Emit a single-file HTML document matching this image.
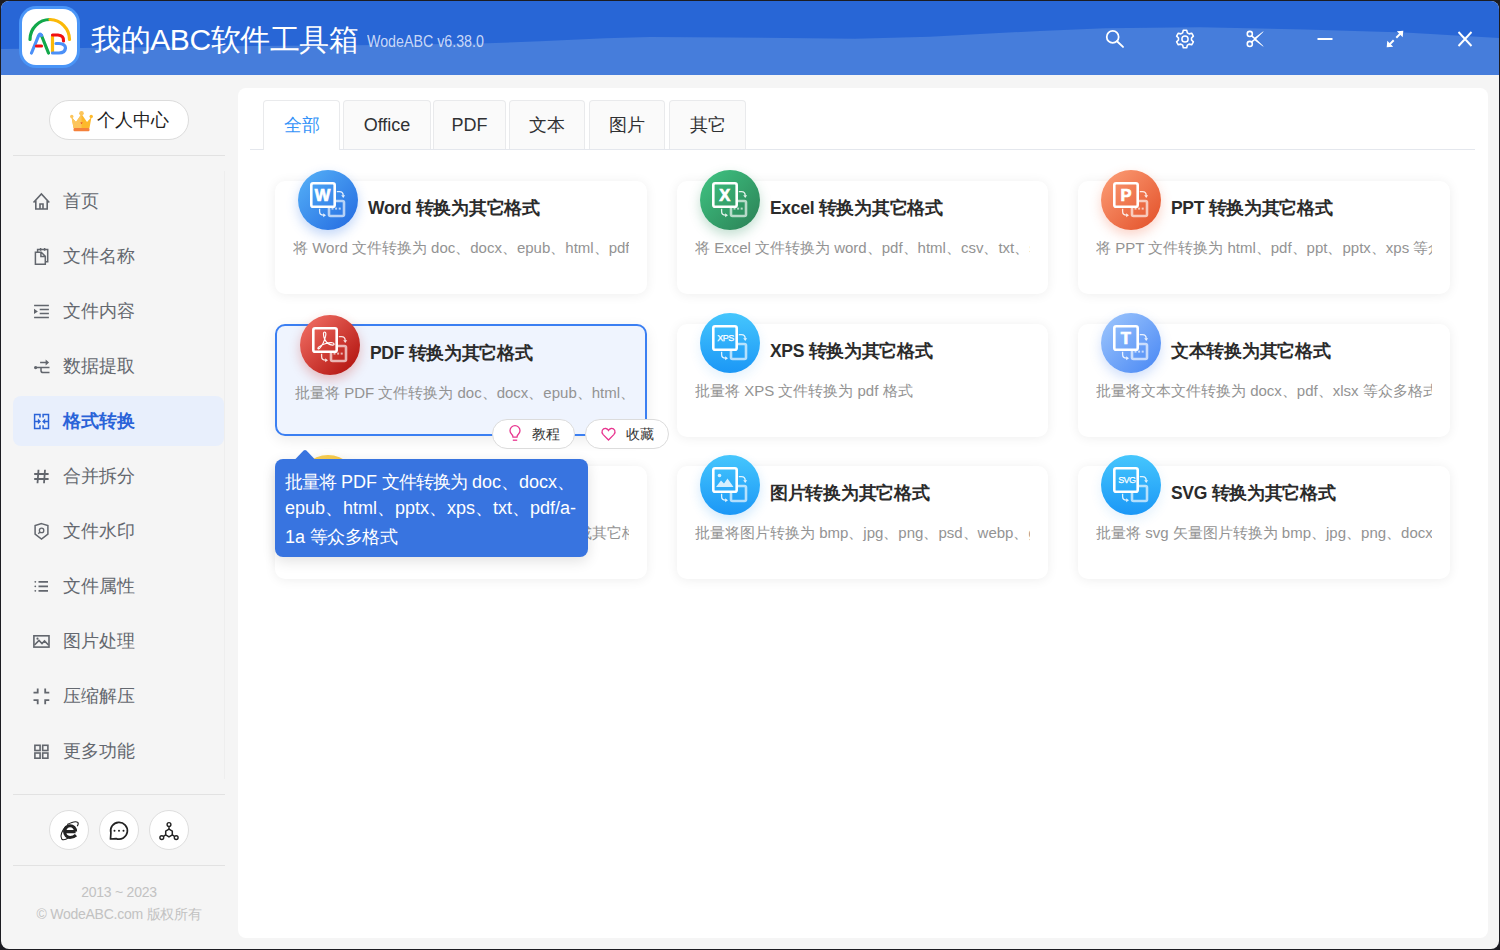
<!DOCTYPE html>
<html><head><meta charset="utf-8"><style>
*{margin:0;padding:0;box-sizing:border-box}
html,body{width:1500px;height:950px;overflow:hidden;background:#1c1c22;font-family:"Liberation Sans",sans-serif}
.a{position:absolute}
#frame{left:0;top:0;width:1500px;height:950px;background:#f5f5f5;clip-path:inset(1px 1px 1px 1px round 8px)}
.t{position:absolute;white-space:nowrap;line-height:1}
svg{position:absolute;overflow:visible}

.card{position:absolute;height:113px;border-radius:10px;background:#fff;box-shadow:0 1px 12px rgba(0,0,0,.07)}
.ctitle{position:absolute;white-space:nowrap;line-height:1;font-size:17.5px;font-weight:bold;color:#2b2b2b;letter-spacing:-.3px}
.cdesc{position:absolute;white-space:nowrap;line-height:1.2;font-size:15px;color:#939393;overflow:hidden}
.circ{position:absolute;width:60px;height:60px;border-radius:30px}
</style></head><body><div id="frame" class="a">
<div class="a" style="left:0;top:0;width:1500px;height:75px;background:#2866d6"></div>
<svg style="left:0;top:0" width="1500" height="75" viewBox="0 0 1500 75"><path fill="#467ddb" d="M0,49 L180,46.7 L380,45 L480,43.5 L540,41.3 L605,38.3 L650,37 L730,37.5 L855,38.7 L930,36.7 L980,34 L1040,31 L1105,28.3 L1200,27.3 L1305,29.4 L1405,32.6 L1500,38 L1500,75 L0,75Z"/></svg>
<div class="a" style="left:19px;top:6px;width:61px;height:62px;border-radius:17px;background:#4a95f7"></div>
<div class="a" style="left:22px;top:9px;width:55px;height:56px;border-radius:14px;background:#fff"></div>
<svg style="left:19px;top:6px" width="61" height="62" viewBox="0 0 61 62" fill="none" stroke-linecap="round" stroke-width="3.2">
<path d="M11,33.5 A20,20 0 0 1 31,13.5" stroke="#12a84a"/>
<path d="M31,13.5 A20,20 0 0 1 50.5,33.5" stroke="#fbb908"/>
<path d="M22.5,29.5 L29.5,47" stroke="#12a84a"/>
<path d="M12.5,47 L19.6,29.6 Q21,26.8 22.6,29.3" stroke="#4b90f8"/>
<path d="M17.5,40 L22.5,40" stroke="#f20f0f"/>
<path d="M33.5,30 L33.5,46" stroke="#fbb908"/>
<path d="M33.5,29 L39,29 Q45,29.5 44.5,35" stroke="#f20f0f"/>
<path d="M37,37.5 L40,37.5 Q46.5,38 46.5,42 Q46,47 40,47 L33.5,47" stroke="#4b90f8"/>
</svg>
<div class="t" style="left:91px;top:25px;font-size:30px;letter-spacing:-0.4px;color:#fff" id="title">我的ABC软件工具箱</div>
<div class="t" style="left:367px;top:34px;font-size:16px;color:#c9d8f6;transform:scaleX(.89);transform-origin:0 0" id="ver">WodeABC v6.38.0</div>
<svg style="left:0;top:0" width="1500" height="75" fill="none" stroke="#fff" stroke-width="1.9" stroke-linecap="round">
<circle cx="1112.7" cy="36.9" r="5.95" stroke-width="1.75"/><path d="M1117,41.2 L1123,46.9" stroke-width="1.9"/>
<path d="M1182.63,32.84 L1183.31,30.31 L1186.69,30.31 L1187.37,32.84 L1189.15,33.87 L1191.68,33.19 L1193.37,36.12 L1191.52,37.97 L1191.52,40.03 L1193.37,41.88 L1191.68,44.81 L1189.15,44.13 L1187.37,45.16 L1186.69,47.69 L1183.31,47.69 L1182.63,45.16 L1180.85,44.13 L1178.32,44.81 L1176.63,41.88 L1178.48,40.03 L1178.48,37.97 L1176.63,36.12 L1178.32,33.19 L1180.85,33.87Z" stroke-width="1.6" stroke-linejoin="round"/>
<circle cx="1185" cy="39" r="3.1" stroke-width="1.5"/>
<circle cx="1249.8" cy="33.9" r="2.55" stroke-width="1.55"/><circle cx="1249.8" cy="43.9" r="2.55" stroke-width="1.55"/>
<path d="M1251.7,35.9 L1255.2,39 M1251.7,41.9 L1255.2,39" stroke-width="1.5"/>
<path d="M1254.2,39.9 L1263.7,47 L1262.8,45.6 L1256.2,39 L1262.8,32.4 L1263.7,31 L1254.2,38.1Z" fill="#fff" stroke="none"/>
<path d="M1317.5,39 L1332.5,39" stroke-width="2.1" stroke-linecap="butt"/>
<path d="M1396.3,37.7 L1400.6,33.4 M1393.7,40.3 L1389.4,44.6" stroke-width="2" stroke-linecap="butt"/>
<path d="M1403.3,30.7 L1402.7,37.2 L1396.8,31.3Z M1386.7,47.3 L1387.3,40.8 L1393.2,46.7Z" fill="#fff" stroke="none"/>
<path d="M1458.5,32 L1471.5,46 M1471.5,32 L1458.5,46" stroke-width="1.9" stroke-linecap="butt"/>
</svg>
<div class="a" style="left:49px;top:100px;width:140px;height:40px;border-radius:20px;background:#fff;border:1px solid #dcdcdc"></div>
<svg style="left:70px;top:110px" width="23" height="22" viewBox="0 0 23 22">
<path d="M1.5,7 L6,12 L11.5,4 L17,12 L21.5,7 L19.5,18 L3.5,18Z" fill="#fdb92c"/>
<path d="M1.5,7 L6,12 L11.5,4 L11.5,18 L3.5,18Z" fill="#fcc55c"/>
<circle cx="11.5" cy="3.2" r="2.3" fill="#fcc55c"/><circle cx="1.8" cy="6.5" r="1.7" fill="#fcc55c"/><circle cx="21.2" cy="6.5" r="1.7" fill="#fdb92c"/>
<rect x="3.5" y="18" width="16" height="3.2" rx="1" fill="#f5813a"/>
<path d="M10.3,12.5 l1.2,1.6 l1.2,-1.6z" fill="#e2352a"/>
</svg>
<div class="t" style="left:97px;top:111px;font-size:18px;color:#222">个人中心</div>
<div class="a" style="left:13px;top:155px;width:212px;height:1px;background:#e2e2e2"></div>
<div class="a" style="left:224px;top:171px;width:1px;height:608px;background:#eeeeee"></div>
<div class="a" style="left:13px;top:396px;width:211px;height:50px;border-radius:8px;background:#e8effc"></div>
<div class="t" style="left:63px;top:192px;font-size:18px;color:#64686f">首页</div>
<div class="t" style="left:63px;top:247px;font-size:18px;color:#64686f">文件名称</div>
<div class="t" style="left:63px;top:302px;font-size:18px;color:#64686f">文件内容</div>
<div class="t" style="left:63px;top:357px;font-size:18px;color:#64686f">数据提取</div>
<div class="t" style="left:63px;top:412px;font-size:18px;font-weight:bold;color:#2a63d8">格式转换</div>
<div class="t" style="left:63px;top:467px;font-size:18px;color:#64686f">合并拆分</div>
<div class="t" style="left:63px;top:522px;font-size:18px;color:#64686f">文件水印</div>
<div class="t" style="left:63px;top:577px;font-size:18px;color:#64686f">文件属性</div>
<div class="t" style="left:63px;top:632px;font-size:18px;color:#64686f">图片处理</div>
<div class="t" style="left:63px;top:687px;font-size:18px;color:#64686f">压缩解压</div>
<div class="t" style="left:63px;top:742px;font-size:18px;color:#64686f">更多功能</div>
<svg style="left:0;top:0" width="230" height="780" fill="none" stroke="#62666d" stroke-width="1.6">
<path d="M33.5,202.5 L41.4,194 L49.3,202.5 M35.8,200.5 V209 H47.2 V200.5 M40,209 V204 H43 V209"/>
<path d="M35.4,252.3 H41.2 L45.3,256.2 V264.3 H35.4Z M40.9,252.3 V256.6 H45.3" stroke-width="1.5"/>
<path d="M37.6,252 V249.4 H47.7 V261.7 H45.5" stroke-width="1.5"/>
<path d="M40.6,248 V250.8 M44.6,248 V250.8" stroke-width="1.5"/>
<path d="M34.1,305.4 H48.9 M39.7,309.4 H48.9 M39.7,313.45 H48.9 M34.1,317.4 H48.9" stroke-width="1.5"/>
<path d="M34,308.7 L37.9,311.4 L34,314.1Z" fill="#62666d" stroke="none"/>
<path d="M35.6,367.6 H49.5 M41,367.6 V370.5 Q41,372.6 43.2,372.6 H49.5" stroke-width="1.5"/>
<path d="M40.1,362.5 H46.5" stroke-width="1.5"/>
<path d="M45.6,359.6 L49.1,362.5 L45.6,365.4Z" fill="#62666d" stroke="none"/>
<circle cx="35.6" cy="367.6" r="1.6" fill="#62666d" stroke="none"/>
<path d="M38.5,469.8 L37.5,483.2 M45,469.8 L44,483.2 M34.2,474 H48.6 M34.2,479 H48.6" stroke-width="1.8"/>
<path d="M41.5,523.6 L47.9,525.5 V534.2 L41.5,539.1 L35.1,534.2 V525.5Z" stroke-width="1.5"/>
<circle cx="41.6" cy="530.4" r="2.2" stroke-width="1.3"/><path d="M40,532 L38.3,533.8" stroke-width="1.3"/>
<path d="M38.5,581.8 H48 M38.5,586.3 H48 M38.5,590.8 H48" stroke-width="1.7"/>
<circle cx="35.3" cy="581.8" r=".9" fill="#62666d" stroke="none"/><circle cx="35.3" cy="586.3" r=".9" fill="#62666d" stroke="none"/><circle cx="35.3" cy="590.8" r=".9" fill="#62666d" stroke="none"/>
<rect x="33.9" y="635.8" width="15.1" height="11.3"/>
<path d="M34.5,645 L39,640.5 L42,643.5 L44.5,641 L48.5,645"/>
<circle cx="37.5" cy="638.7" r="1.1" fill="#62666d" stroke="none"/>
<path d="M33.5,692.7 H37.7 V688.5 M45.2,688.5 V692.7 H49.3 M33.5,700.2 H37.7 V704.3 M45.2,704.3 V700.2 H49.3" stroke-width="1.8"/>
<rect x="34.9" y="745.3" width="5.2" height="5.2"/><rect x="42.7" y="745.3" width="5.2" height="5.2"/><rect x="34.9" y="753" width="5.2" height="5.2"/><rect x="42.7" y="753" width="5.2" height="5.2"/>
</svg>
<svg style="left:0;top:0" width="230" height="780" fill="none" stroke="#2a63d8" stroke-width="1.6">
<path d="M40,417.6 V414.5 H34.6 V428.4 H40 V425.3 M43.1,417.6 V414.5 H48.5 V428.4 H43.1 V425.3 M34.6,421.4 H38.5 M44.6,421.4 H48.5" stroke-width="1.5"/>
<path d="M37.9,418.6 L41,421.4 L37.9,424.2Z M45.2,418.6 L42.1,421.4 L45.2,424.2Z" fill="#2a63d8" stroke="none"/>
</svg>
<div class="a" style="left:13px;top:794px;width:212px;height:1px;background:#e2e2e2"></div>
<div class="a" style="left:13px;top:865px;width:212px;height:1px;background:#e2e2e2"></div>
<div class="a" style="left:49px;top:810px;width:40px;height:40px;border-radius:20px;background:#fff;border:1px solid #dedede"></div>
<div class="a" style="left:99px;top:810px;width:40px;height:40px;border-radius:20px;background:#fff;border:1px solid #dedede"></div>
<div class="a" style="left:149px;top:810px;width:40px;height:40px;border-radius:20px;background:#fff;border:1px solid #dedede"></div>
<svg style="left:0;top:0" width="230" height="950" fill="none" stroke="#222" stroke-width="1.8">
<path d="M65,831.6 H75.6 M75.6,831.6 A5.5,5.9 0 0 0 64.6,831.6 A5.5,5.9 0 0 0 70,837.5 Q73.6,837.5 76,835.2" stroke-width="3.1"/>
<path d="M66,826.2 Q59,834.5 61.6,838.8 Q63.6,841.2 68.5,837.8" stroke-width="1.1"/>
<path d="M67.2,824.6 Q75,820.3 77.8,822.4 Q78.9,823.8 77.2,826.3" stroke-width="1.1"/>
<path d="M110.9,832.9 L110.5,839 L116.1,838.6 A8.4,8.4 0 1 0 110.9,832.9Z" stroke-width="1.7" stroke-linejoin="round"/>
<circle cx="114.5" cy="830.8" r="1" fill="#222" stroke="none"/><circle cx="119" cy="830.8" r="1" fill="#222" stroke="none"/><circle cx="123.5" cy="830.8" r="1" fill="#222" stroke="none"/>
<path d="M169,829.2 L172.3,831.1 L172.3,834.9 L169,836.8 L165.7,834.9 L165.7,831.1Z" stroke-width="1.5"/>
<circle cx="169" cy="824.5" r="1.9" stroke-width="1.4"/><circle cx="161.8" cy="837.6" r="1.9" stroke-width="1.4"/><circle cx="176.2" cy="837.6" r="1.9" stroke-width="1.4"/>
<path d="M169,826.4 V829.2 M165.7,834.9 L163.5,836.4 M172.3,834.9 L174.5,836.4" stroke-width="1.4"/>
</svg>
<div class="t" style="left:0;width:238px;text-align:center;top:885px;font-size:14px;letter-spacing:-.25px;color:#c2c2c2">2013 ~ 2023</div>
<div class="t" style="left:0;width:238px;text-align:center;top:907px;font-size:14px;letter-spacing:-.25px;color:#c2c2c2">© WodeABC.com 版权所有</div>
<div class="a" style="left:238px;top:88px;width:1250px;height:850px;border-radius:8px;background:#fff"></div>
<div class="a" style="left:250px;top:149px;width:1225px;height:1px;background:#e4e7ed"></div>
<div class="a" style="left:263px;top:100px;width:77px;height:50px;border:1px solid #e9eaec;border-bottom:none;border-radius:4px 4px 0 0;background:#fff"></div>
<div class="t" style="left:263px;width:77px;text-align:center;top:116px;font-size:18px;color:#3593f8">全部</div>
<div class="a" style="left:343px;top:100px;width:88px;height:49px;border:1px solid #e9eaec;border-bottom:none;border-radius:4px 4px 0 0;background:#fafafa"></div>
<div class="t" style="left:343px;width:88px;text-align:center;top:116px;font-size:18px;color:#303133">Office</div>
<div class="a" style="left:433px;top:100px;width:73px;height:49px;border:1px solid #e9eaec;border-bottom:none;border-radius:4px 4px 0 0;background:#fafafa"></div>
<div class="t" style="left:433px;width:73px;text-align:center;top:116px;font-size:18px;color:#303133">PDF</div>
<div class="a" style="left:509px;top:100px;width:76px;height:49px;border:1px solid #e9eaec;border-bottom:none;border-radius:4px 4px 0 0;background:#fafafa"></div>
<div class="t" style="left:509px;width:76px;text-align:center;top:116px;font-size:18px;color:#303133">文本</div>
<div class="a" style="left:589px;top:100px;width:76px;height:49px;border:1px solid #e9eaec;border-bottom:none;border-radius:4px 4px 0 0;background:#fafafa"></div>
<div class="t" style="left:589px;width:76px;text-align:center;top:116px;font-size:18px;color:#303133">图片</div>
<div class="a" style="left:669px;top:100px;width:77px;height:49px;border:1px solid #e9eaec;border-bottom:none;border-radius:4px 4px 0 0;background:#fafafa"></div>
<div class="t" style="left:669px;width:77px;text-align:center;top:116px;font-size:18px;color:#303133">其它</div>
<div class="card" style="left:275px;top:181px;width:372px"></div>
<div class="circ" style="left:298px;top:170px;background:linear-gradient(135deg,#56b2f8,#2369e0);box-shadow:0 5px 12px rgba(40,110,230,.28)"><svg width="60" height="60" viewBox="0 0 60 60" style="left:0;top:0"><path d="M37.5,31 H44.5 Q46,31 46,32.5 V44.5 Q46,46 44.5,46 H32.5 Q31,46 31,44.5 V37.5" fill="none" stroke="rgba(255,255,255,.65)" stroke-width="2.6"/><g fill="rgba(255,255,255,.65)"><rect x="33.5" y="37.6" width="2" height="2"/><rect x="37.1" y="37.6" width="2" height="2"/><rect x="40.7" y="37.6" width="2" height="2"/></g><rect x="13.3" y="13.3" width="23.4" height="23.4" rx="1.8" fill="none" stroke="#fff" stroke-width="2.6"/><path d="M38.8,21.6 H41.5 Q45.2,21.6 45.2,25.6" stroke="rgba(255,255,255,0.85)" stroke-width="1.3" fill="none"/><path d="M43.2,25.2 L47.2,25.2 L45.2,28Z" fill="rgba(255,255,255,0.85)"/><path d="M21.6,38.8 V41.5 Q21.6,45.2 25.6,45.2" stroke="rgba(255,255,255,0.85)" stroke-width="1.3" fill="none"/><path d="M25.2,43.2 L25.2,47.2 L28,45.2Z" fill="rgba(255,255,255,0.85)"/><text x="24.6" y="31" text-anchor="middle" font-family="Liberation Sans" font-weight="bold" font-size="16.5" fill="#fff" stroke="#fff" stroke-width=".7">W</text></svg></div>
<div class="ctitle" style="left:368px;top:200px">Word 转换为其它格式</div>
<div class="cdesc" style="left:293px;top:239px;width:336px">将 Word 文件转换为 doc、docx、epub、html、pdf、txt 等众多格式</div>
<div class="card" style="left:677px;top:181px;width:371px"></div>
<div class="circ" style="left:700px;top:170px;background:linear-gradient(135deg,#3fc583,#2b8055);box-shadow:0 5px 12px rgba(40,140,90,.28)"><svg width="60" height="60" viewBox="0 0 60 60" style="left:0;top:0"><path d="M37.5,31 H44.5 Q46,31 46,32.5 V44.5 Q46,46 44.5,46 H32.5 Q31,46 31,44.5 V37.5" fill="none" stroke="rgba(255,255,255,.65)" stroke-width="2.6"/><g fill="rgba(255,255,255,.65)"><rect x="33.5" y="37.6" width="2" height="2"/><rect x="37.1" y="37.6" width="2" height="2"/><rect x="40.7" y="37.6" width="2" height="2"/></g><rect x="13.3" y="13.3" width="23.4" height="23.4" rx="1.8" fill="none" stroke="#fff" stroke-width="2.6"/><path d="M38.8,21.6 H41.5 Q45.2,21.6 45.2,25.6" stroke="rgba(255,255,255,0.85)" stroke-width="1.3" fill="none"/><path d="M43.2,25.2 L47.2,25.2 L45.2,28Z" fill="rgba(255,255,255,0.85)"/><path d="M21.6,38.8 V41.5 Q21.6,45.2 25.6,45.2" stroke="rgba(255,255,255,0.85)" stroke-width="1.3" fill="none"/><path d="M25.2,43.2 L25.2,47.2 L28,45.2Z" fill="rgba(255,255,255,0.85)"/><text x="24.8" y="31" text-anchor="middle" font-family="Liberation Sans" font-weight="bold" font-size="16.5" fill="#fff" stroke="#fff" stroke-width=".7">X</text></svg></div>
<div class="ctitle" style="left:770px;top:200px">Excel 转换为其它格式</div>
<div class="cdesc" style="left:695px;top:239px;width:335px">将 Excel 文件转换为 word、pdf、html、csv、txt、svg 等众多格式</div>
<div class="card" style="left:1078px;top:181px;width:372px"></div>
<div class="circ" style="left:1101px;top:170px;background:linear-gradient(135deg,#fda078,#e24e27);box-shadow:0 5px 12px rgba(240,100,60,.28)"><svg width="60" height="60" viewBox="0 0 60 60" style="left:0;top:0"><path d="M37.5,31 H44.5 Q46,31 46,32.5 V44.5 Q46,46 44.5,46 H32.5 Q31,46 31,44.5 V37.5" fill="none" stroke="rgba(255,255,255,.65)" stroke-width="2.6"/><g fill="rgba(255,255,255,.65)"><rect x="33.5" y="37.6" width="2" height="2"/><rect x="37.1" y="37.6" width="2" height="2"/><rect x="40.7" y="37.6" width="2" height="2"/></g><rect x="13.3" y="13.3" width="23.4" height="23.4" rx="1.8" fill="none" stroke="#fff" stroke-width="2.6"/><path d="M38.8,21.6 H41.5 Q45.2,21.6 45.2,25.6" stroke="rgba(255,255,255,0.85)" stroke-width="1.3" fill="none"/><path d="M43.2,25.2 L47.2,25.2 L45.2,28Z" fill="rgba(255,255,255,0.85)"/><path d="M21.6,38.8 V41.5 Q21.6,45.2 25.6,45.2" stroke="rgba(255,255,255,0.85)" stroke-width="1.3" fill="none"/><path d="M25.2,43.2 L25.2,47.2 L28,45.2Z" fill="rgba(255,255,255,0.85)"/><text x="25" y="31" text-anchor="middle" font-family="Liberation Sans" font-weight="bold" font-size="16.5" fill="#fff" stroke="#fff" stroke-width=".7">P</text></svg></div>
<div class="ctitle" style="left:1171px;top:200px">PPT 转换为其它格式</div>
<div class="cdesc" style="left:1096px;top:239px;width:336px">将 PPT 文件转换为 html、pdf、ppt、pptx、xps 等众多格式</div>
<div class="card" style="left:275px;top:324px;width:372px;height:112px;background:#eff4fe;border:2px solid #3b7ff2;box-shadow:0 4px 14px rgba(0,0,0,.08)"></div>
<div class="circ" style="left:300px;top:315px;background:linear-gradient(135deg,#f57469,#ad0c08);box-shadow:0 5px 12px rgba(200,40,30,.28)"><svg width="60" height="60" viewBox="0 0 60 60" style="left:0;top:0"><path d="M37.5,31 H44.5 Q46,31 46,32.5 V44.5 Q46,46 44.5,46 H32.5 Q31,46 31,44.5 V37.5" fill="none" stroke="rgba(255,255,255,.65)" stroke-width="2.6"/><g fill="rgba(255,255,255,.65)"><rect x="33.5" y="37.6" width="2" height="2"/><rect x="37.1" y="37.6" width="2" height="2"/><rect x="40.7" y="37.6" width="2" height="2"/></g><rect x="13.3" y="13.3" width="23.4" height="23.4" rx="1.8" fill="none" stroke="#fff" stroke-width="2.6"/><path d="M38.8,21.6 H41.5 Q45.2,21.6 45.2,25.6" stroke="rgba(255,255,255,0.85)" stroke-width="1.3" fill="none"/><path d="M43.2,25.2 L47.2,25.2 L45.2,28Z" fill="rgba(255,255,255,0.85)"/><path d="M21.6,38.8 V41.5 Q21.6,45.2 25.6,45.2" stroke="rgba(255,255,255,0.85)" stroke-width="1.3" fill="none"/><path d="M25.2,43.2 L25.2,47.2 L28,45.2Z" fill="rgba(255,255,255,0.85)"/><path d="M24.7,17 C23,17 23.2,20.5 24.6,24 C26.3,28 29.5,29.9 32.6,30.1 C34.7,30.1 34.6,27.9 32.1,27.7 C28,27.4 22,29.5 18.9,31.9 C16.9,33.5 18.2,34.8 19.8,33.2 C22.2,30.7 24.6,25.2 25.6,21.2 C26.1,18.7 25.9,17 24.7,17Z" fill="none" stroke="#fff" stroke-width="1.15"/></svg></div>
<div class="ctitle" style="left:370px;top:345px">PDF 转换为其它格式</div>
<div class="cdesc" style="left:295px;top:384px;width:336px">批量将 PDF 文件转换为 doc、docx、epub、html、pptx、xps 等众多格式</div>
<div class="card" style="left:677px;top:324px;width:371px"></div>
<div class="circ" style="left:700px;top:313px;background:linear-gradient(180deg,#45c6fd,#1b97f6);box-shadow:0 5px 12px rgba(30,150,240,.12)"><svg width="60" height="60" viewBox="0 0 60 60" style="left:0;top:0"><path d="M37.5,31 H44.5 Q46,31 46,32.5 V44.5 Q46,46 44.5,46 H32.5 Q31,46 31,44.5 V37.5" fill="none" stroke="rgba(255,255,255,.65)" stroke-width="2.6"/><rect x="13.3" y="13.3" width="23.4" height="23.4" rx="1.8" fill="none" stroke="#fff" stroke-width="2.6"/><path d="M38.8,21.6 H41.5 Q45.2,21.6 45.2,25.6" stroke="rgba(255,255,255,0.85)" stroke-width="1.3" fill="none"/><path d="M43.2,25.2 L47.2,25.2 L45.2,28Z" fill="rgba(255,255,255,0.85)"/><path d="M21.6,38.8 V41.5 Q21.6,45.2 25.6,45.2" stroke="rgba(255,255,255,0.85)" stroke-width="1.3" fill="none"/><path d="M25.2,43.2 L25.2,47.2 L28,45.2Z" fill="rgba(255,255,255,0.85)"/><text x="25.5" y="27.9" text-anchor="middle" font-family="Liberation Sans" font-size="9" letter-spacing="-.5" fill="#fff" stroke="#fff" stroke-width=".25">XPS</text></svg></div>
<div class="ctitle" style="left:770px;top:343px">XPS 转换为其它格式</div>
<div class="cdesc" style="left:695px;top:382px;width:335px">批量将 XPS 文件转换为 pdf 格式</div>
<div class="card" style="left:1078px;top:324px;width:372px"></div>
<div class="circ" style="left:1101px;top:313px;background:linear-gradient(135deg,#a0c8fd,#4786f4);box-shadow:0 5px 12px rgba(70,130,240,.25)"><svg width="60" height="60" viewBox="0 0 60 60" style="left:0;top:0"><path d="M37.5,31 H44.5 Q46,31 46,32.5 V44.5 Q46,46 44.5,46 H32.5 Q31,46 31,44.5 V37.5" fill="none" stroke="rgba(255,255,255,.65)" stroke-width="2.6"/><g fill="rgba(255,255,255,.65)"><rect x="33.5" y="37.6" width="2" height="2"/><rect x="37.1" y="37.6" width="2" height="2"/><rect x="40.7" y="37.6" width="2" height="2"/></g><rect x="13.3" y="13.3" width="23.4" height="23.4" rx="1.8" fill="none" stroke="#fff" stroke-width="2.6"/><path d="M38.8,21.6 H41.5 Q45.2,21.6 45.2,25.6" stroke="rgba(255,255,255,0.85)" stroke-width="1.3" fill="none"/><path d="M43.2,25.2 L47.2,25.2 L45.2,28Z" fill="rgba(255,255,255,0.85)"/><path d="M21.6,38.8 V41.5 Q21.6,45.2 25.6,45.2" stroke="rgba(255,255,255,0.85)" stroke-width="1.3" fill="none"/><path d="M25.2,43.2 L25.2,47.2 L28,45.2Z" fill="rgba(255,255,255,0.85)"/><text x="24.8" y="31" text-anchor="middle" font-family="Liberation Sans" font-weight="bold" font-size="16.5" fill="#fff" stroke="#fff" stroke-width=".7">T</text></svg></div>
<div class="ctitle" style="left:1171px;top:343px">文本转换为其它格式</div>
<div class="cdesc" style="left:1096px;top:382px;width:336px">批量将文本文件转换为 docx、pdf、xlsx 等众多格式</div>
<div class="card" style="left:275px;top:466px;width:372px"></div>
<div class="circ" style="left:298px;top:455px;background:linear-gradient(135deg,#fad45c,#f2b92a);box-shadow:0 5px 12px rgba(240,180,40,.25)"><svg width="60" height="60" viewBox="0 0 60 60" style="left:0;top:0"><path d="M37.5,31 H44.5 Q46,31 46,32.5 V44.5 Q46,46 44.5,46 H32.5 Q31,46 31,44.5 V37.5" fill="none" stroke="rgba(255,255,255,.65)" stroke-width="2.6"/><g fill="rgba(255,255,255,.65)"><rect x="33.5" y="37.6" width="2" height="2"/><rect x="37.1" y="37.6" width="2" height="2"/><rect x="40.7" y="37.6" width="2" height="2"/></g><rect x="13.3" y="13.3" width="23.4" height="23.4" rx="1.8" fill="none" stroke="#fff" stroke-width="2.6"/><path d="M38.8,21.6 H41.5 Q45.2,21.6 45.2,25.6" stroke="rgba(255,255,255,0.85)" stroke-width="1.3" fill="none"/><path d="M43.2,25.2 L47.2,25.2 L45.2,28Z" fill="rgba(255,255,255,0.85)"/><path d="M21.6,38.8 V41.5 Q21.6,45.2 25.6,45.2" stroke="rgba(255,255,255,0.85)" stroke-width="1.3" fill="none"/><path d="M25.2,43.2 L25.2,47.2 L28,45.2Z" fill="rgba(255,255,255,0.85)"/></svg></div>
<div class="ctitle" style="left:368px;top:485px">电子书转换为其它格式</div>
<div class="cdesc" style="left:577px;top:524px;width:52px">或其它格式</div>
<div class="card" style="left:677px;top:466px;width:371px"></div>
<div class="circ" style="left:700px;top:455px;background:linear-gradient(180deg,#45c6fd,#1b97f6);box-shadow:0 5px 12px rgba(30,150,240,.2)"><svg width="60" height="60" viewBox="0 0 60 60" style="left:0;top:0"><path d="M37.5,31 H44.5 Q46,31 46,32.5 V44.5 Q46,46 44.5,46 H32.5 Q31,46 31,44.5 V37.5" fill="none" stroke="rgba(255,255,255,.65)" stroke-width="2.6"/><rect x="13.3" y="13.3" width="23.4" height="23.4" rx="1.8" fill="none" stroke="#fff" stroke-width="2.6"/><path d="M38.8,21.6 H41.5 Q45.2,21.6 45.2,25.6" stroke="rgba(255,255,255,0.85)" stroke-width="1.3" fill="none"/><path d="M43.2,25.2 L47.2,25.2 L45.2,28Z" fill="rgba(255,255,255,0.85)"/><path d="M21.6,38.8 V41.5 Q21.6,45.2 25.6,45.2" stroke="rgba(255,255,255,0.85)" stroke-width="1.3" fill="none"/><path d="M25.2,43.2 L25.2,47.2 L28,45.2Z" fill="rgba(255,255,255,0.85)"/><circle cx="19.5" cy="20.5" r="1.8" fill="rgba(255,255,255,.8)"/><path d="M16,32 L21,25.5 L24,28.5 L27.5,23.5 L33.5,32Z" fill="rgba(255,255,255,.8)"/></svg></div>
<div class="ctitle" style="left:770px;top:485px">图片转换为其它格式</div>
<div class="cdesc" style="left:695px;top:524px;width:335px">批量将图片转换为 bmp、jpg、png、psd、webp、gif 等众多格式</div>
<div class="card" style="left:1078px;top:466px;width:372px"></div>
<div class="circ" style="left:1101px;top:455px;background:linear-gradient(180deg,#45c6fd,#1b97f6);box-shadow:0 5px 12px rgba(30,150,240,.12)"><svg width="60" height="60" viewBox="0 0 60 60" style="left:0;top:0"><path d="M37.5,31 H44.5 Q46,31 46,32.5 V44.5 Q46,46 44.5,46 H32.5 Q31,46 31,44.5 V37.5" fill="none" stroke="rgba(255,255,255,.65)" stroke-width="2.6"/><rect x="13.3" y="13.3" width="23.4" height="23.4" rx="1.8" fill="none" stroke="#fff" stroke-width="2.6"/><path d="M38.8,21.6 H41.5 Q45.2,21.6 45.2,25.6" stroke="rgba(255,255,255,0.85)" stroke-width="1.3" fill="none"/><path d="M43.2,25.2 L47.2,25.2 L45.2,28Z" fill="rgba(255,255,255,0.85)"/><path d="M21.6,38.8 V41.5 Q21.6,45.2 25.6,45.2" stroke="rgba(255,255,255,0.85)" stroke-width="1.3" fill="none"/><path d="M25.2,43.2 L25.2,47.2 L28,45.2Z" fill="rgba(255,255,255,0.85)"/><text x="25.8" y="27.9" text-anchor="middle" font-family="Liberation Sans" font-size="9" letter-spacing="-.6" fill="#fff" stroke="#fff" stroke-width=".25">SVG</text></svg></div>
<div class="ctitle" style="left:1171px;top:485px">SVG 转换为其它格式</div>
<div class="cdesc" style="left:1096px;top:524px;width:336px">批量将 svg 矢量图片转换为 bmp、jpg、png、docx 等众多格式</div>
<div class="a" style="left:492px;top:419px;width:83px;height:30px;border-radius:15px;background:#fff;border:1px solid #dcdcdc"></div>
<div class="a" style="left:585px;top:419px;width:84px;height:30px;border-radius:15px;background:#fff;border:1px solid #dcdcdc"></div>
<svg style="left:0;top:0" width="700" height="460" fill="none" stroke="#e8358f" stroke-width="1.3">
<path d="M513,437.2 Q513,435.5 511.7,434.2 Q510,432.3 510,430.7 A4.9,4.9 0 0 1 520,430.7 Q520,432.3 518.3,434.2 Q517,435.5 517,437.2Z"/>
<path d="M512.8,440.2 H517.2"/>
<path d="M608.5,440 L603.2,434.6 Q601.3,432.5 602.3,430.3 Q603.5,428.2 605.8,428.5 Q607.5,428.8 608.5,430.4 Q609.5,428.8 611.2,428.5 Q613.5,428.2 614.7,430.3 Q615.7,432.5 613.8,434.6Z"/>
</svg>
<div class="t" style="left:532px;top:427px;font-size:14px;color:#333">教程</div>
<div class="t" style="left:626px;top:427px;font-size:14px;color:#333">收藏</div>
<div class="a" style="left:275px;top:459px;width:313px;height:98px;border-radius:8px;background:#3874e0;box-shadow:0 4px 14px rgba(0,0,0,.12)"></div>
<svg style="left:294px;top:449px" width="22" height="11" viewBox="0 0 22 11"><path d="M1,10.5 L9.6,1.6 Q11,0.3 12.4,1.6 L21,10.5Z" fill="#3874e0"/></svg>
<div class="t" style="left:285px;top:469px;font-size:18px;line-height:27.5px;color:#fff;white-space:normal;width:320px"><span style="letter-spacing:-1px">批量将</span> PDF <span style="letter-spacing:-1px">文件转换为</span> doc、docx、<br><span style="position:relative;top:-1.5px">epub、html、pptx、xps、txt、pdf/a-</span><br>1a <span style="letter-spacing:-.6px">等众多格式</span></div>
</div></body></html>
